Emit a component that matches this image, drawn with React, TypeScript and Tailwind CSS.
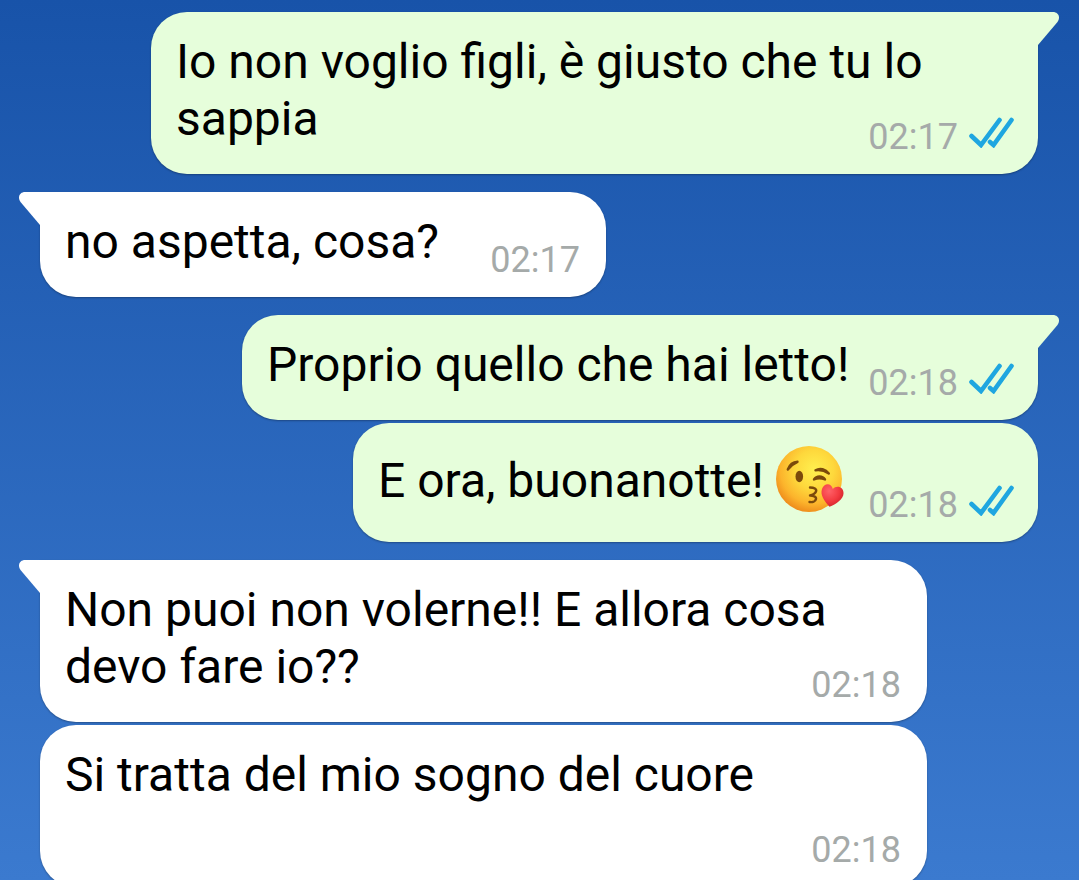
import { twMerge } from "tailwind-merge";

type Message = {
    id: number
    lines: string[]
    lastLine?: string
    time: string
    isOwn?: boolean
    isFirst?: boolean
    hasKiss?: boolean
    width: string
}

const messages: Message[] = [
    { id: 1, lines: ["Io non voglio figli, è giusto che tu lo"], lastLine: "sappia", time: "02:17", isOwn: true, isFirst: true, width: "w-[887px]" },
    { id: 2, lines: [], lastLine: "no aspetta, cosa?", time: "02:17", isFirst: true, width: "w-[566px]" },
    { id: 3, lines: [], lastLine: "Proprio quello che hai letto!", time: "02:18", isOwn: true, isFirst: true, width: "w-[796px]" },
    { id: 4, lines: [], lastLine: "E ora, buonanotte!", time: "02:18", isOwn: true, hasKiss: true, width: "w-[685px]" },
    { id: 5, lines: ["Non puoi non volerne!! E allora cosa"], lastLine: "devo fare io??", time: "02:18", isFirst: true, width: "w-[887px]" },
    { id: 6, lines: ["Si tratta del mio sogno del cuore"], time: "02:18", width: "w-[887px]" },
]

export default function App() {
    return (
        <main className="h-screen overflow-hidden bg-linear-to-b from-[#1853a9] to-[#3b7acf] pt-3 pr-[41px] pl-10 font-['Roboto',sans-serif] text-black">
            <div className="flex flex-col">
                {messages.map(message => (
                    <Bubble key={message.id} message={message} />
                ))}
            </div>
        </main>
    )
}

function Bubble({ message }: { message: Message }) {
    const { lines, lastLine, time, isOwn, isFirst, hasKiss, width } = message
    return (
        <article className={twMerge(
            "relative mt-[3px] flex max-w-full flex-col rounded-[36px] pt-[21px] pr-6 pb-4 pl-[25px] text-[48px] leading-[57px] shadow-[0_1px_2px_rgba(0,0,0,0.3)]",
            isOwn ? "self-end bg-[#e6fedb]" : "self-start bg-white",
            isFirst && "mt-[18px] first:mt-0",
            isFirst && (isOwn ? "rounded-tr-none" : "rounded-tl-none"),
            width
        )}>
            {isFirst && <Tail isOwn={isOwn} />}
            {lines.map(line => <p key={line}>{line}</p>)}
            <div className={`flex justify-between ${hasKiss ? "min-h-[82px]" : "min-h-[68px]"}`}>
                <div className="flex items-center gap-2.5 self-start whitespace-nowrap">
                    {lastLine && <p>{lastLine}</p>}
                    {hasKiss && <KissFace />}
                </div>
                <div className={`flex gap-2.5 self-end text-[36px] leading-[42px] text-[#a5aaa9] ${isOwn ? "" : "pr-0.5"}`}>
                    <time>{time}</time>
                    {isOwn && <ReadTicks />}
                </div>
            </div>
        </article>
    )
}

function Tail({ isOwn }: { isOwn?: boolean }) {
    return (
        <svg viewBox="0 0 22 34" aria-hidden="true" className={twMerge("absolute top-0 h-[34px] w-[22px]", isOwn ? "left-full -ml-px fill-[#e6fedb]" : "right-full -mr-px -scale-x-100 fill-white")}>
            <path d="M0 0H16C21 0 24 5 20.500 10L1 33H0Z" />
        </svg>
    )
}

function ReadTicks() {
    return (
        <svg viewBox="0 0 46 32" role="img" aria-label="Read" className="h-8 w-[46px] fill-none stroke-[#1fa6e0]">
            <path d="M3.500 20L13 29L31.500 4M22 26L25.500 29L43.500 4" strokeWidth="4.600" strokeLinecap="round" />
        </svg>
    )
}

function KissFace() {
    return (
        <svg viewBox="0 0 72 72" role="img" aria-label="Face blowing a kiss" className="size-[72px] shrink-0">
            <defs>
                <radialGradient id="face" cx="0.58" cy="0.36" r="0.66">
                    <stop offset="0" stopColor="#fff04f" />
                    <stop offset="0.45" stopColor="#fed83c" />
                    <stop offset="0.78" stopColor="#fcb42c" />
                    <stop offset="1" stopColor="#ee8b1b" />
                </radialGradient>
                <radialGradient id="heart" cx="0.35" cy="0.3" r="0.75">
                    <stop offset="0" stopColor="#ff6268" />
                    <stop offset="0.6" stopColor="#f33a40" />
                    <stop offset="1" stopColor="#cf222b" />
                </radialGradient>
            </defs>
            <circle cx="35" cy="35" r="33" fill="url(#face)" />
            <ellipse cx="25.300" cy="32.500" rx="3.800" ry="5.700" fill="#7b4a0b" />
            <g fill="none" stroke="#7b4a0b" strokeWidth="2.400" strokeLinecap="round" strokeLinejoin="round">
                <path d="M13.800 25.500C15.500 21 19 18 23.500 17.800C19.500 19.500 16.500 22 13.800 25.500Z" />
                <path d="M41.500 26.200C46 23.500 51.500 25 54.800 29.500C50.500 26.500 46 25.500 41.500 26.200Z" />
                <path d="M40 35.500C42.500 31.500 48.500 31.500 51 35.500C47 34 43.500 34 40 35.500Z" />
                <path d="M36 43.500C40 43.500 43 45 42 47.500C41 50 38 51 36 51.500C39 51.500 42.500 52.500 42 55C41.500 57.500 38.500 58.500 35.500 58" />
            </g>
            <path d="M55.500 62.800C50 56.500 46 51 48 45C50 38.500 57.500 38.500 58.800 45C63 40.500 70 43.500 69.500 49.500C69.500 55 62 60.500 55.500 62.800Z" fill="url(#heart)" />
        </svg>
    )
}
